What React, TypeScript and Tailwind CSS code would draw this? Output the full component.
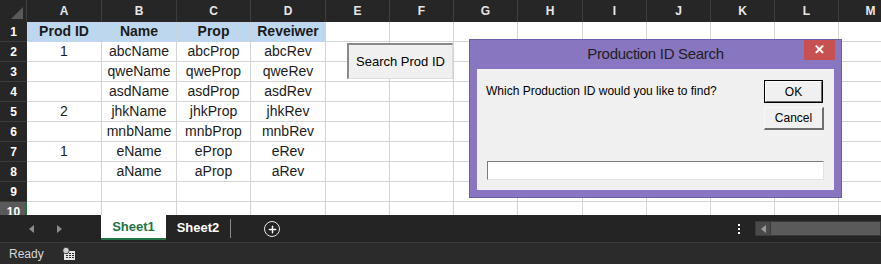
import { Plus } from "lucide-react";

const cols = [
  { l: "A", w: "w-[75px]" },
  { l: "B", w: "w-[75px]" },
  { l: "C", w: "w-[74px]" },
  { l: "D", w: "w-[75px]" },
  { l: "E", w: "w-[64px]" },
  { l: "F", w: "w-[64px]" },
  { l: "G", w: "w-[64px]" },
  { l: "H", w: "w-[65px]" },
  { l: "I", w: "w-[64px]" },
  { l: "J", w: "w-[64px]" },
  { l: "K", w: "w-[64px]" },
  { l: "L", w: "w-[64px]" },
  { l: "M", w: "w-[64px]" },
];

const data = [
  ["Prod ID", "Name", "Prop", "Reveiwer"],
  ["1", "abcName", "abcProp", "abcRev"],
  ["", "qweName", "qweProp", "qweRev"],
  ["", "asdName", "asdProp", "asdRev"],
  ["2", "jhkName", "jhkProp", "jhkRev"],
  ["", "mnbName", "mnbProp", "mnbRev"],
  ["1", "eName", "eProp", "eRev"],
  ["", "aName", "aProp", "aRev"],
  [],
  [],
];

const Sheet = () => (
  <div className="h-[215px] overflow-hidden bg-white">
    {/* Column headers */}
    <div className="flex h-[22px] bg-[#262626]">
      <div className="relative w-[27px] shrink-0 border-r border-[#3c3c3c]">
        <div className="absolute right-[3px] bottom-[3px] w-0 h-0 border-l-[12px] border-l-transparent border-b-[12px] border-b-[#595959]" />
      </div>
      {cols.map((c) => (
        <div
          key={c.l}
          className={`${c.w} shrink-0 border-r border-[#3c3c3c] flex items-center justify-center text-[12px] font-bold text-[#e6e6e6]`}
        >
          {c.l}
        </div>
      ))}
    </div>

    {/* Rows */}
    {data.map((row, r) => (
      <div key={r} className="flex h-[20px]">
        <div
          className={
            r === 9
              ? "w-[27px] shrink-0 bg-[#5a5a5a] border-r-2 border-[#217346] flex items-center justify-center text-[12px] font-bold text-white pl-[2px]"
              : "w-[27px] shrink-0 bg-[#262626] border-b border-[#3c3c3c] flex items-center justify-center text-[12px] font-bold text-white"
          }
        >
          {r + 1}
        </div>
        {cols.map((c, i) => {
          const head = r === 0 && i < 4;
          return (
            <div
              key={c.l}
              className={`${c.w} shrink-0 border-b border-r flex items-center justify-center text-[14px] text-[#1b1b1b] ${
                head ? "bg-[#bdd7ee] font-bold border-b-[#bdd7ee] border-r-[#c9d3dc]" : "border-[#d4d4d4]"
              } ${head && i === 3 ? "border-r-[#1a1a1a]" : ""}`}
            >
              {row[i] ?? ""}
            </div>
          );
        })}
      </div>
    ))}
  </div>
);

const Dialog = () => (
  <div className="absolute left-[469px] top-[39px] w-[373px] h-[159px] bg-[#8876c0] border border-[#6c5ca8] flex flex-col">
    <div className="h-[29px] flex items-center justify-center relative">
      <span className="text-[15px] text-[#1e1e1e] tracking-[-0.3px]">Production ID Search</span>
      <div className="absolute right-[6px] top-0 w-[31px] h-[20px] bg-[#c75050] flex items-center justify-center text-white text-[13px] font-bold">
        ✕
      </div>
    </div>
    <div className="mx-[7px] mb-[7px] flex-1 bg-[#f0f0f0] relative px-[9px] pt-[12px]">
      <div className="flex justify-between items-start">
        <span className="text-[12px] text-black mt-[1px]">Which Production ID would you like to find?</span>
        <div className="flex flex-col gap-[4px] mr-[1px] mt-[-1px]">
          <div className="w-[59px] h-[23px] border border-black flex">
            <div className="flex-1 border-t border-l border-white border-r border-b border-r-[#696969] border-b-[#696969] bg-[#f0f0f0] flex items-center justify-center text-[12px] text-black">
              OK
            </div>
          </div>
          <div className="w-[60px] h-[23px] border-t border-l border-[#f8f8f8] border-r-2 border-b-2 border-r-[#6e6e6e] border-b-[#6e6e6e] bg-[#f0f0f0] flex items-center justify-center text-[12px] text-black">
            Cancel
          </div>
        </div>
      </div>
      <div className="absolute left-[10px] right-[10px] bottom-[10px] h-[19px] bg-white border-t border-l border-[#7a7a7a] border-r border-b border-r-[#e3e3e3] border-b-[#e3e3e3]" />
    </div>
  </div>
);

const TabBar = () => (
  <div className="h-[28px] bg-[#242424] border-b border-[#3a3a3a] flex items-start relative">
    <div className="w-[101px] h-[27px] flex items-center">
      <div className="ml-[29px] w-0 h-0 border-y-[4px] border-y-transparent border-r-[5px] border-r-[#8c8c8c]" />
      <div className="ml-[23px] w-0 h-0 border-y-[4px] border-y-transparent border-l-[5px] border-l-[#8c8c8c]" />
    </div>
    <div className="w-[65px] h-[25px] bg-white border-b-2 border-[#217346] flex items-center justify-center text-[13px] font-bold text-[#217346]">
      Sheet1
    </div>
    <div className="w-[64px] h-[25px] flex items-center justify-center text-[13px] font-bold text-white">Sheet2</div>
    <div className="w-px h-[19px] mt-[4px] bg-[#8a8a8a]" />
    <div className="ml-[33px] mt-[6px] w-[16px] h-[16px] rounded-full border-[1.5px] border-[#e6e6e6] flex items-center justify-center">
      <Plus className="w-[11px] h-[11px] text-white" strokeWidth={3} />
    </div>
    <div className="ml-auto flex items-center h-[27px]">
      <div className="flex flex-col gap-[2px] mr-[15px]">
        <div className="w-[2px] h-[2px] bg-white" />
        <div className="w-[2px] h-[2px] bg-white" />
        <div className="w-[2px] h-[2px] bg-white" />
      </div>
      <div className="w-[126px] h-[15px] bg-[#3a3a3a] flex p-px">
        <div className="w-[14px] bg-[#4a4a4a] flex items-center justify-center">
          <div className="w-0 h-0 border-y-[4px] border-y-transparent border-r-[5px] border-r-[#9a9a9a]" />
        </div>
        <div className="flex-1 bg-[#5a5a5a] ml-px" />
      </div>
    </div>
  </div>
);

const StatusBar = () => (
  <div className="h-[21px] bg-[#2b2b2b] flex items-center">
    <span className="ml-[9px] text-[12px] text-[#d6d6d6]">Ready</span>
    <svg className="ml-[18px]" width="14" height="14" viewBox="0 0 14 14">
      <rect x="2" y="4" width="11" height="9" fill="#e6e6e6" />
      <g fill="#2b2b2b">
        <rect x="4" y="6" width="2" height="1" />
        <rect x="7" y="6" width="2" height="1" />
        <rect x="10" y="6" width="2" height="1" />
        <rect x="4" y="8" width="2" height="1" />
        <rect x="7" y="8" width="2" height="1" />
        <rect x="10" y="8" width="2" height="1" />
        <rect x="4" y="10" width="2" height="1" />
        <rect x="7" y="10" width="2" height="1" />
        <rect x="10" y="10" width="2" height="1" />
      </g>
      <circle cx="4" cy="3.5" r="3.2" fill="#d0d0d0" stroke="#2b2b2b" strokeWidth="0.8" />
    </svg>
  </div>
);

export default function App() {
  return (
    <div className="w-[881px] h-[264px] overflow-hidden relative font-['Liberation_Sans',Arial,sans-serif] bg-[#2b2b2b]">
      <Sheet />
      {/* Form button on sheet */}
      <div className="absolute left-[347px] top-[43px] w-[106px] h-[36px] bg-[#f0f0f0] border-t-2 border-l-2 border-[#8a8a8a] border-r border-b border-r-[#dcdcdc] border-b-[#dcdcdc] flex items-center justify-center text-[13px] text-black">
        Search Prod ID
      </div>
      <Dialog />
      <TabBar />
      <StatusBar />
    </div>
  );
}
